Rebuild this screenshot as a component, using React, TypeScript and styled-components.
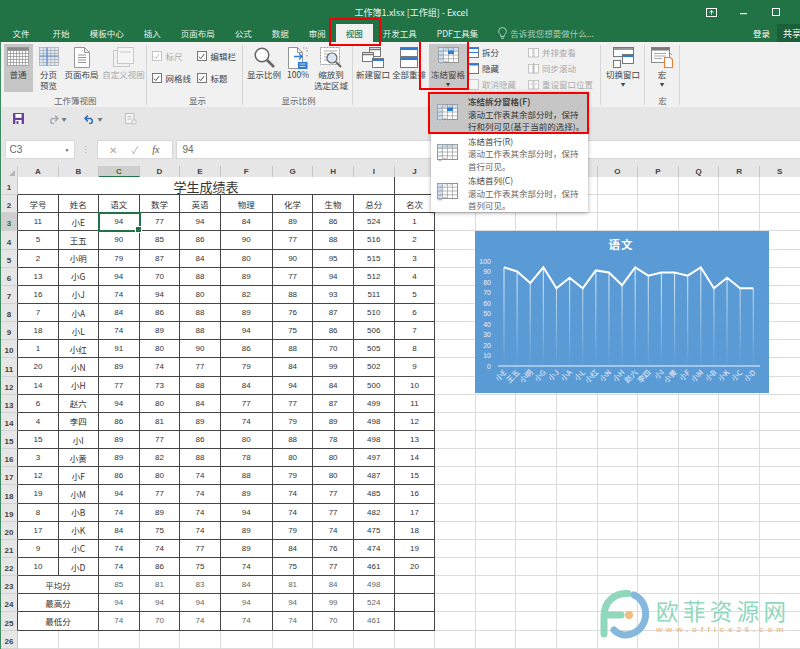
import React from "react";
import styled, { createGlobalStyle } from "styled-components";

const GlobalStyle = createGlobalStyle`
  html, body { margin: 0; padding: 0; background: #fff; }
  * { box-sizing: border-box; }
`;
const CJK = `"Noto Sans CJK SC", "Liberation Sans", sans-serif`;
const LATIN = `"Liberation Sans", "Noto Sans CJK SC", sans-serif`;

const Page = styled.div`
  position: relative; width: 800px; height: 649px; overflow: hidden;
  font-family: ${CJK}; font-size: 8.5px; color: #444; background: #fff;
`;
const Head = styled.header`background: #217346; color: #fff; height: 42px; display: flex; flex-direction: column;`;
const TitleBar = styled.div`height: 24px; display: flex; align-items: center; position: relative;`;
const TitleText = styled.div`flex: 1; padding-left: 30px; text-align: center; font-size: 9px; color: #e8f1ec; padding-top: 1px;`;
const WinControls = styled.div`display: flex; padding-right: 7px; margin-left: -97px; color: #fff;`;
const WinBtn = styled.div`width: 32.5px; height: 24px; display: flex; align-items: center; justify-content: center;`;
const TabRow = styled.nav`height: 18px; display: flex; align-items: stretch; padding-left: 2.6px;`;
const Tab = styled.div<{ $active?: boolean }>`
  position: relative; padding: 0 10px; display: flex; align-items: center; font-size: 8.5px;
  white-space: nowrap; color: ${(p) => (p.$active ? "#217346" : "#e6f0ea")};
  background: ${(p) => (p.$active ? "#f1f1f1" : "transparent")};
  font-weight: ${(p) => (p.$active ? 500 : 400)};
  &:first-child { padding-right: 13px; }
`;
const TellMe = styled.div`display: flex; align-items: center; gap: 3px; padding-left: 10px; color: #a9cdb9; font-size: 8.5px; flex: 1;`;
const SignIn = styled.div`display: flex; align-items: center; padding-right: 7px; font-size: 8.5px;`;
const Share = styled.div`width: 23px; background: #1c5f3b; display: flex; align-items: center; gap: 2px; padding-left: 4px; font-size: 9px; overflow: hidden; white-space: nowrap;`;

const Body = styled.div`border-left: 1.5px solid #3f8a62; height: 607px; display: flex; flex-direction: column; overflow: hidden;`;
const Ribbon = styled.section`height: 65px; background: #f1f1f1; display: flex; flex: none;`;
const Group = styled.div<{ $w: number; $pad?: number; $plain?: boolean }>`
  width: ${(p) => p.$w}px; flex: none; display: flex; flex-direction: column; position: relative;
  padding-left: ${(p) => p.$pad ?? 0}px;
  &::after {
    content: ""; position: absolute; right: 0; top: 3px; bottom: 2px; width: 1px;
    background: ${(p) => (p.$plain ? "transparent" : "#d6d6d6")};
  }
`;
const GroupBody = styled.div`height: 53px; padding-top: 2px; display: flex; align-items: flex-start;`;
const GroupLabel = styled.div`height: 11px; line-height: 11px; text-align: center; color: #666; font-size: 8.5px;`;
const BigBtn = styled.div<{ $w: number; $h?: number; $on?: boolean; $off?: boolean; $ml?: number }>`
  position: relative; width: ${(p) => p.$w}px; height: ${(p) => p.$h ?? 48}px; flex: none; margin-left: ${(p) => p.$ml ?? 0}px;
  background: ${(p) => (p.$on ? "#c6c6c6" : "transparent")}; color: ${(p) => (p.$off ? "#aaa" : "#444")};
  display: flex; flex-direction: column; align-items: center; text-align: center; padding-top: 3px;
  line-height: 10.5px; white-space: nowrap;
`;
const IconBox = styled.div`height: 22px; flex: none; display: flex; align-items: flex-start; justify-content: center;`;
const Caret = styled.div`font-size: 4.5px; line-height: 6px; color: #444; margin-top: 1px;`;
const Checks = styled.div`display: grid; grid-template-columns: 45px auto; grid-auto-rows: 22px; padding-top: 1px;`;
const CheckItem = styled.div<{ $off?: boolean }>`
  display: flex; align-items: center; gap: 4px; color: ${(p) => (p.$off ? "#aaa" : "#444")};
`;
const Box = styled.span<{ $off?: boolean }>`
  width: 9.5px; height: 9.5px; border: 1px solid ${(p) => (p.$off ? "#c4c4c4" : "#777")};
  background: #fff; display: inline-flex; align-items: center; justify-content: center;
`;
const SmallCol = styled.div<{ $ml?: number; $w: number }>`
  width: ${(p) => p.$w}px; margin-left: ${(p) => p.$ml ?? 0}px; flex: none; display: flex; flex-direction: column;
`;
const SmallItem = styled.div<{ $off?: boolean }>`
  height: 16px; display: flex; align-items: center; gap: 3px; white-space: nowrap;
  color: ${(p) => (p.$off ? "#aaa" : "#444")};
`;

const Qat = styled.div`height: 23px; background: #e6e6e6; flex: none; display: flex; align-items: center; padding-left: 11.5px;`;
const QatSlot = styled.div<{ $w: number }>`width: ${(p) => p.$w}px; flex: none; display: flex; align-items: center; gap: 3px; font-size: 5px; color: #777;`;
const FormulaBar = styled.div`height: 36px; flex: none; background: #e6e6e6; display: flex; align-items: flex-start; padding: 10px 0 0 3.5px; color: #666;`;
const NameBox = styled.div`
  width: 70px; height: 19px; background: #fff; border: 1px solid #d8d8d8; display: flex; align-items: center;
  justify-content: space-between; padding: 0 4px; font: 10px ${LATIN}; color: #666;
`;
const NameCaret = styled.span`font-size: 5px;`;
const Dots = styled.div`width: 22px; text-align: center; font-size: 9px; color: #aaa; letter-spacing: 0; line-height: 19px;`;
const FuncBox = styled.div`
  width: 76px; height: 19px; background: #fff; border: 1px solid #d8d8d8; display: flex; align-items: center;
  justify-content: space-around; padding: 0 5px; color: #aaa; font-size: 10px;
`;
const Fx = styled.i`font: italic 10px "Liberation Serif", serif; color: #555;`;
const Input = styled.div`
  flex: 1; margin-left: 3px; height: 19px; background: #fff; border: 1px solid #d8d8d8; border-right: 0;
  padding-left: 6px; font: 10px/17px ${LATIN}; color: #666;
`;

const Sheet = styled.div`
  display: grid; flex: 1; min-height: 0; overflow: hidden;
  grid-template-columns: 17px 40.8px 40px 41px 40.4px 40.6px 52px 40.7px 40.3px 41px 40.4px repeat(9, 40.6px);
  grid-template-rows: 11px repeat(26, 18.15px);
`;
const Corner = styled.div`background: #e6e6e6; position: relative; border-right: 1px solid #cfcfcf;
  &::after { content: ""; position: absolute; right: 2px; bottom: 1px; border: 3px solid transparent; border-right-color: #b5b5b5; border-bottom-color: #b5b5b5; }
`;
const ColHead = styled.div<{ $on?: boolean }>`
  background: ${(p) => (p.$on ? "#cfcfcf" : "#e6e6e6")}; border-right: 1px solid #c6c6c6;
  border-bottom: ${(p) => (p.$on ? "1.5px solid #217346" : "0")}; text-align: center; color: ${(p) => (p.$on ? "#217346" : "#444")};
  font: bold 8px/11px ${LATIN};
`;
const RowHead = styled.div<{ $on?: boolean; $frame?: boolean }>`
  background: ${(p) => (p.$on ? "#cfcfcf" : "#e6e6e6")};
  border-right: ${(p) => (p.$on ? "1.5px solid #217346" : p.$frame ? "1px solid #444" : "1px solid #c6c6c6")};
  border-bottom: 1px solid #d2d2d2; color: ${(p) => (p.$on ? "#217346" : "#444")};
  font: bold 8px/1 ${LATIN}; display: flex; align-items: flex-end; justify-content: center; padding-bottom: 2px;
`;
const Cell = styled.div<{ $frame?: boolean; $span?: number; $active?: boolean; $soft?: boolean; $title?: boolean }>`
  position: relative; background: #fff; min-width: 0;
  grid-column: span ${(p) => p.$span ?? 1};
  border-right: 1px solid ${(p) => (p.$frame ? "#444" : "#dcdcdc")};
  border-bottom: 1px solid ${(p) => (p.$frame ? "#444" : "#dcdcdc")};
  display: flex; align-items: center; justify-content: center; white-space: nowrap;
  font-family: ${LATIN}; font-size: ${(p) => (p.$title ? 13 : 8)}px;
  color: ${(p) => (p.$soft ? "#666" : "#333")};
  ${(p) => p.$title && "padding-top: 1px;"}
  ${(p) =>
    p.$active &&
    `outline: 2px solid #217346; outline-offset: -1px; z-index: 1;
     &::after { content: ""; position: absolute; right: -3px; bottom: -3px; width: 5px; height: 5px; background: #217346; border: 1px solid #fff; }`}
`;
const CnText = styled.span`font-family: ${CJK}; font-size: 8.5px;`;
const CnTitle = styled.span`font-family: ${CJK}; font-size: 13px; color: #333;`;

const Menu = styled.div`
  position: absolute; left: 431px; top: 92px; width: 157px; background: #fff; z-index: 5;
  box-shadow: 0 1px 4px rgba(0,0,0,.35); padding-top: 1px;
`;
const MenuItem = styled.div<{ $on?: boolean }>`
  position: relative;
  height: 39.7px; display: flex; background: ${(p) => (p.$on ? "#c6c6c6" : "#fff")}; padding-left: 6px;
`;
const MenuIcon = styled.div`width: 31px; flex: none; padding-top: 11px;`;
const MenuText = styled.div`line-height: 12.5px; padding-top: 2px; white-space: nowrap;`;
const MenuTitle = styled.div<{ $bold?: boolean }>`font-weight: ${(p) => (p.$bold ? 700 : 400)}; color: #444;`;
const MenuDesc = styled.div<{ $on?: boolean }>`color: ${(p) => (p.$on ? "#333" : "#666")};`;

const RedBox = styled.span<{ $box: string }>`
  position: absolute; inset: ${(p) => p.$box}; border: 2.6px solid #f40000; z-index: 8; pointer-events: none;
`;
const Chart = styled.div`position: absolute; left: 475px; top: 231px; width: 294px; height: 162px; background: #5b9bd5; z-index: 2;`;
const ChartSvg = styled.svg`display: block;`;
const Mark = styled.div`position: absolute; left: 600px; top: 590px; z-index: 3; display: flex; gap: 6px; pointer-events: none;`;
const MarkText = styled.div`display: flex; flex-direction: column; padding-top: 8px;`;
const MarkName = styled.div`font-size: 22.5px; line-height: 24px; letter-spacing: 4.4px; color: #90d7bd; white-space: nowrap;`;
const MarkUrl = styled.div`font: bold 8px/10px ${LATIN}; letter-spacing: 3.85px; color: #f2c08a; white-space: nowrap; margin-top: 3px;`;

/* ---------- icons ---------- */
const range = (n: number) => Array.from({ length: n }, (_, i) => i);
const GridLines = ({ x, y, w, h, cols, rows, c = "#9a9a9a" }: any) => (
  <g stroke={c} strokeWidth=".7" fill="none">
    <rect x={x} y={y} width={w} height={h} />
    {range(cols - 1).map((i) => <line key={"c" + i} x1={x + ((i + 1) * w) / cols} x2={x + ((i + 1) * w) / cols} y1={y} y2={y + h} />)}
    {range(rows - 1).map((i) => <line key={"r" + i} y1={y + ((i + 1) * h) / rows} y2={y + ((i + 1) * h) / rows} x1={x} x2={x + w} />)}
  </g>
);
const NormalIcon = () => (
  <svg width="22" height="19" viewBox="0 0 22 19"><rect x=".5" y=".5" width="21" height="18" fill="#fff" />
    <rect x=".5" y=".5" width="21" height="3" fill="#8a8a8a" /><GridLines x={.5} y={.5} w={21} h={18} cols={7} rows={6} c="#8d8d8d" /></svg>
);
const BreakIcon = () => (
  <svg width="20" height="19" viewBox="0 0 20 19"><rect x=".5" y=".5" width="19" height="18" fill="#dde8f6" />
    <GridLines x={.5} y={.5} w={19} h={18} cols={5} rows={6} c="#a8a8a8" /><path d="M8 .5v18M.5 9h19" stroke="#5b8fd0" strokeWidth="1.2" /></svg>
);
const PageIcon = ({ c = "#8a8a8a" }: { c?: string }) => (
  <svg width="16" height="21" viewBox="0 0 16 21" fill="none" stroke={c} strokeWidth=".9"><path d="M.5.5h10l5 5v15H.5zM10.5.5v5h5" fill="#fff" />
    <path d="M4 8h8M4 10.5h8M4 13h8M4 15.5h8" /></svg>
);
const CustomIcon = () => (
  <svg width="21" height="20" viewBox="0 0 21 20" fill="none" stroke="#c9c9c9"><rect x=".5" y="3.5" width="16" height="16" /><rect x="4.5" y=".5" width="16" height="16" fill="#f5f5f5" /><path d="M7 5h11" /></svg>
);
const Magnifier = () => (
  <svg width="21" height="21" viewBox="0 0 21 21" fill="none"><circle cx="8" cy="8" r="6.8" stroke="#666" strokeWidth="1.5" fill="#fff" /><path d="M13 13l7 7" stroke="#666" strokeWidth="2.6" /></svg>
);
const HundredIcon = () => (
  <svg width="20" height="23" viewBox="0 0 20 23" fill="none" stroke="#888" strokeWidth=".9"><path d="M.5.5h9l5 5v16H.5zM9.5.5v5h5" fill="#fff" /><path d="M15 1h4v4M19 8v3" strokeDasharray="1.5 1.5" />
    <path d="M6 9.5h8M11 6.5l3 3-3 3" stroke="#2b7cd3" strokeWidth="1.3" /><rect x="10" y="15" width="9.5" height="7" fill="#2b7cd3" stroke="none" /><path d="M11.5 17h6M11.5 19.5h6" stroke="#fff" strokeWidth=".7" /></svg>
);
const ZoomSelIcon = () => (
  <svg width="23" height="22" viewBox="0 0 23 22" fill="none"><rect x=".5" y=".5" width="19" height="17" stroke="#999" fill="#fff" strokeDasharray="2 1" /><path d="M4 4h13M4 7h5M4 10h4M4 13h4" stroke="#aaa" />
    <circle cx="12" cy="11" r="5" stroke="#666" strokeWidth="1.2" fill="#dbe7f5" /><path d="M16 15l5 5" stroke="#666" strokeWidth="2" /></svg>
);
const NewWinIcon = () => (
  <svg width="22" height="21" viewBox="0 0 22 21" fill="none"><rect x="7.5" y=".5" width="11" height="9" fill="#fff" stroke="#777" /><path d="M7.5 2.5h11" stroke="#777" strokeWidth="1.5" />
    <rect x=".5" y="5.5" width="11" height="9" fill="#fff" stroke="#777" /><path d="M.5 7.5h11" stroke="#777" strokeWidth="1.5" /><rect x="10.5" y="11.5" width="11" height="9" fill="#fff" stroke="#777" /><path d="M10.5 13h11" stroke="#2b7cd3" strokeWidth="2" /></svg>
);
const ArrangeIcon = () => (
  <svg width="18" height="21" viewBox="0 0 18 21" fill="none"><rect x=".5" y=".5" width="17" height="9" fill="#fff" stroke="#777" /><path d="M.5 2h17" stroke="#2b7cd3" strokeWidth="2" /><rect x=".5" y="10.5" width="17" height="10" fill="#fff" stroke="#777" /><path d="M.5 12h17" stroke="#2b7cd3" strokeWidth="2" /></svg>
);
const FreezeIcon = ({ top = true, left = true, mark = true }: { top?: boolean; left?: boolean; mark?: boolean }) => (
  <svg width="21" height="19" viewBox="0 0 21 19" fill="none">
    <rect x=".5" y=".5" width="20" height="15" fill="#fff" stroke="#888" />
    {top && <rect x=".5" y=".5" width="20" height="4" fill="#cfe0f3" />}
    {left && <rect x=".5" y=".5" width="5" height="17" fill="#cfe0f3" />}
    <GridLines x={.5} y={.5} w={20} h={15} cols={4} rows={4} c="#999" />
    {mark && <rect x="10" y="3.5" width="6" height="3.5" fill="#2b7cd3" />}
    <path d="M.5 15.5q2.5 3 5 0t5 0" stroke="#999" strokeWidth=".7" />
    <path d="M2 5l3-2M2 9l3-2M2 13l3-2M7 3l3-2M12 3l3-2" stroke="#7fa6d6" strokeWidth=".6" />
  </svg>
);
const SplitIcon = ({ mode, off }: { mode: string; off?: boolean }) => (
  <svg width="11" height="11" viewBox="0 0 11 11" fill="none">
    <rect x=".5" y=".5" width="10" height="10" fill={off ? "#f5f5f5" : "#fff"} stroke={off ? "#c8c8c8" : "#777"} />
    {mode === "split" && <path d="M.5 5.5h10M.5 1.5h10" stroke="#2b7cd3" strokeWidth="1.2" />}
    {mode === "hide" && <path d="M.5 1.5h10" stroke="#2b7cd3" strokeWidth="2" />}
  </svg>
);
const PairIcon = ({ mode }: { mode: string }) => (
  <svg width="11" height="11" viewBox="0 0 11 11" fill="none" stroke="#c4c4c4"><rect x=".5" y="1.5" width="4.5" height="8.5" fill="#fafafa" /><rect x="6" y="1.5" width="4.5" height="8.5" fill="#fafafa" />
    {mode === "sync" && <path d="M5.5 0v11" strokeDasharray="1.5 1" stroke="#aaa" />}{mode === "reset" && <path d="M2 5h2M7 5h2" />}</svg>
);
const SwitchIcon = () => (
  <svg width="21" height="21" viewBox="0 0 21 21" fill="none"><rect x=".5" y=".5" width="20" height="9" fill="#fff" stroke="#777" /><path d="M.5 2h20" stroke="#777" strokeWidth="1.5" />
    <rect x="9.5" y="7.5" width="11" height="9" fill="#fff" stroke="#777" /><path d="M9.5 9h11" stroke="#2b7cd3" strokeWidth="2" /><rect x=".5" y="13.5" width="7" height="7" fill="#fff" stroke="#777" /></svg>
);
const MacroIcon = () => (
  <svg width="22" height="21" viewBox="0 0 22 21" fill="none"><rect x=".5" y=".5" width="18" height="15" fill="#fff" stroke="#888" /><rect x=".5" y=".5" width="18" height="3" fill="#7a7a7a" /><path d="M3 6.5h12M3 9h12M3 11.5h8" stroke="#aaa" />
    <path d="M13.5 10.5h6l2 2v8h-8z" fill="#fff" stroke="#ed7d31" strokeWidth="1.2" /><path d="M19 6l2 2" stroke="#ed7d31" /></svg>
);
const Tick = ({ off }: { off?: boolean }) => (
  <svg width="7" height="7" viewBox="0 0 7 7" fill="none"><path d="M.8 3.6l2 2L6.2 1" stroke={off ? "#bbb" : "#555"} strokeWidth="1" /></svg>
);
const Bulb = () => (
  <svg width="9" height="12" viewBox="0 0 9 12" fill="none" stroke="#bcd9c9" strokeWidth=".9"><path d="M2.8 8C1.5 7 .6 6 .6 4.4a3.9 3.9 0 017.8 0C8.4 6 7.5 7 6.2 8v1.5H2.8zM3 11.2h3" /></svg>
);
const Person = () => (
  <svg width="12" height="13" viewBox="0 0 12 13" fill="none" stroke="#fff" strokeWidth="1.1"><circle cx="5.5" cy="4" r="3.2" /><path d="M.8 12.5c.3-3 2-4.8 4.7-4.8M8 10h4M10 8v4" /></svg>
);
const SaveIcon = () => (
  <svg width="11" height="11" viewBox="0 0 11 11"><rect width="11" height="11" fill="#6a3f9e" /><rect x="2.4" y="1" width="6.2" height="3.8" fill="#fff" /><rect x="2.4" y="7" width="6.2" height="4" fill="#fff" /><rect x="3.5" y="8" width="2" height="3" fill="#6a3f9e" /></svg>
);
const Arrow = ({ c, flip }: { c: string; flip?: boolean }) => (
  <svg width="11" height="10" viewBox="0 0 11 10" fill="none" stroke={c} strokeWidth="1.5" transform={flip ? "scale(-1 1)" : undefined}><path d="M1 4.5h6a3 3 0 010 5H5M3.8 1.5l-2.8 3 2.8 3" /></svg>
);
const QatDoc = () => (
  <svg width="12" height="12" viewBox="0 0 12 12" fill="none" stroke="#c0c0c0"><rect x=".5" y=".5" width="8.5" height="10" fill="#f2f2f2" /><path d="M2.5 3.5h4M2.5 6h4" /><circle cx="9" cy="9" r="2.3" fill="#eee" /></svg>
);
const Logo = () => (
  <svg width="50" height="50" viewBox="0 0 50 50" fill="none" strokeLinecap="round" strokeWidth="7">
    <path d="M28 3.5C14 3 4 12 4 26v18M4 25h17" stroke="#8fd8bc" />
    <path d="M34 5c18 8 15 38-8 40-5 0-9-2-12-5" stroke="#86b8de" />
    <circle cx="29" cy="25" r="4" fill="#f2bd80" />
  </svg>
);

/* ---------- data ---------- */
/* K to N lie entirely under the open menu, so their header letters do not show. */
const columns = ["A", "B", "C", "D", "E", "F", "G", "H", "I", "J", "", "", "", "", "O", "P", "Q", "R", "S"];
const heads = ["学号", "姓名", "语文", "数学", "英语", "物理", "化学", "生物", "总分", "名次"];
const rows: (string | number)[][] = [
  [11, "小E", 94, 77, 94, 84, 89, 86, 524, 1], [5, "王五", 90, 85, 86, 90, 77, 88, 516, 2],
  [2, "小明", 79, 87, 84, 80, 90, 95, 515, 3], [13, "小G", 94, 70, 88, 89, 77, 94, 512, 4],
  [16, "小J", 74, 94, 80, 82, 88, 93, 511, 5], [7, "小A", 84, 86, 88, 89, 76, 87, 510, 6],
  [18, "小L", 74, 89, 88, 94, 75, 86, 506, 7], [1, "小红", 91, 80, 90, 86, 88, 70, 505, 8],
  [20, "小N", 89, 74, 77, 79, 84, 99, 502, 9], [14, "小H", 77, 73, 88, 84, 94, 84, 500, 10],
  [6, "赵六", 94, 80, 84, 77, 77, 87, 499, 11], [4, "李四", 86, 81, 89, 74, 79, 89, 498, 12],
  [15, "小I", 89, 77, 86, 80, 88, 78, 498, 13], [3, "小黄", 89, 82, 88, 78, 80, 80, 497, 14],
  [12, "小F", 86, 80, 74, 88, 79, 80, 487, 15], [19, "小M", 94, 77, 74, 89, 74, 77, 485, 16],
  [8, "小B", 74, 89, 74, 94, 74, 77, 482, 17], [17, "小K", 84, 75, 74, 89, 79, 74, 475, 18],
  [9, "小C", 74, 74, 77, 89, 84, 76, 474, 19], [10, "小D", 74, 86, 75, 74, 75, 77, 461, 20],
];
const stats: [string, number[]][] = [
  ["平均分", [85, 81, 83, 84, 81, 84, 498]],
  ["最高分", [94, 94, 94, 94, 94, 99, 524]],
  ["最低分", [74, 70, 74, 74, 74, 70, 461]],
];
const blanks = (n: number, k: string) => range(n).map((i) => <Cell key={k + i} />);

const SalesChart = () => {
  const vals = rows.map((r) => r[2] as number);
  const names = rows.map((r) => r[1] as string);
  const X = (i: number) => 29 + i * 13.12;
  const Y = (v: number) => 135 - v * 1.05;
  return (
    <Chart>
      <ChartSvg width="294" height="162" viewBox="0 0 294 162" fontFamily={CJK}>
        <defs>
          <linearGradient id="drop" gradientUnits="userSpaceOnUse" x1="0" y1="30" x2="0" y2="135">
            <stop offset="0" stopColor="#fff" stopOpacity=".85" />
            <stop offset="1" stopColor="#fff" stopOpacity="0" />
          </linearGradient>
        </defs>
        <text x="146" y="17.5" textAnchor="middle" fill="#fff" fontSize="11.5" fontWeight="700" letterSpacing="1">语文</text>
        {range(11).map((i) => (
          <text key={i} x="16" y={Y(i * 10) + 2.6} textAnchor="end" fill="#e9f1fa" fontSize="7" fontFamily={LATIN}>{i * 10}</text>
        ))}
        {vals.map((v, i) => <line key={i} x1={X(i)} x2={X(i)} y1={Y(v)} y2={135} stroke="url(#drop)" strokeWidth="1.1" />)}
        <line x1="23" x2="285" y1="135" y2="135" stroke="#eaf2fb" strokeWidth="1" />
        <polyline points={vals.map((v, i) => `${X(i)},${Y(v)}`).join(" ")} fill="none" stroke="#fff" strokeWidth="2" />
        {names.map((n, i) => (
          <text key={n} transform={`translate(${X(i) + 3} 142) rotate(-45)`} textAnchor="end" fill="#e9f1fa" fontSize="7.5">{n}</text>
        ))}
      </ChartSvg>
    </Chart>
  );
};

export default function App() {
  return (
    <Page>
      <GlobalStyle />
      <Head>
        <TitleBar>
          <TitleText>工作簿1.xlsx  [工作组] - Excel</TitleText>
          <WinControls>
            <WinBtn><svg width="11" height="9" viewBox="0 0 11 9" fill="none" stroke="#fff"><rect x=".5" y=".5" width="10" height="8" /><path d="M5.5 6.5v-4M3.5 4.5l2-2 2 2" /></svg></WinBtn>
            <WinBtn><svg width="8" height="8" viewBox="0 0 8 8"><rect y="5" width="7" height="1.2" fill="#fff" /></svg></WinBtn>
            <WinBtn><svg width="9" height="9" viewBox="0 0 9 9" fill="none" stroke="#fff"><rect x=".5" y=".5" width="7" height="7" /></svg></WinBtn>
          </WinControls>
        </TitleBar>
        <TabRow>
          <Tab>文件</Tab><Tab>开始</Tab><Tab>模板中心</Tab><Tab>插入</Tab><Tab>页面布局</Tab><Tab>公式</Tab><Tab>数据</Tab><Tab>审阅</Tab>
          <Tab $active>视图<RedBox $box="-6px -8px -4px -7px" /></Tab>
          <Tab>开发工具</Tab><Tab>PDF工具集</Tab>
          <TellMe><Bulb />告诉我您想要做什么...</TellMe>
          <SignIn>登录</SignIn>
          <Share><Person />共享</Share>
        </TabRow>
      </Head>
      <Body>
        <Ribbon>
          <Group $w={146} $pad={2.5}>
            <GroupBody>
              <BigBtn $w={29} $on><IconBox><NormalIcon /></IconBox>普通</BigBtn>
              <BigBtn $w={26} $ml={3}><IconBox><BreakIcon /></IconBox>分页<br />预览</BigBtn>
              <BigBtn $w={40}><IconBox><PageIcon /></IconBox>页面布局</BigBtn>
              <BigBtn $w={44} $off><IconBox><CustomIcon /></IconBox><span>自定义视图</span></BigBtn>
            </GroupBody>
            <GroupLabel>工作簿视图</GroupLabel>
          </Group>
          <Group $w={96} $pad={5}>
            <GroupBody>
              <Checks>
                <CheckItem $off><Box $off><Tick off /></Box>标尺</CheckItem>
                <CheckItem><Box><Tick /></Box>编辑栏</CheckItem>
                <CheckItem><Box><Tick /></Box>网格线</CheckItem>
                <CheckItem><Box><Tick /></Box>标题</CheckItem>
              </Checks>
            </GroupBody>
            <GroupLabel>显示</GroupLabel>
          </Group>
          <Group $w={110} $pad={1}>
            <GroupBody>
              <BigBtn $w={40}><IconBox><Magnifier /></IconBox>显示比例</BigBtn>
              <BigBtn $w={28}><IconBox><HundredIcon /></IconBox><span>100%</span></BigBtn>
              <BigBtn $w={38}><IconBox><ZoomSelIcon /></IconBox>缩放到<br />选定区域</BigBtn>
            </GroupBody>
            <GroupLabel>显示比例</GroupLabel>
          </Group>
          <Group $w={248} $pad={2}>
            <GroupBody>
              <BigBtn $w={36}><IconBox><NewWinIcon /></IconBox>新建窗口</BigBtn>
              <BigBtn $w={36}><IconBox><ArrangeIcon /></IconBox>全部重排</BigBtn>
              <BigBtn $w={38} $h={45} $ml={2} $on><IconBox><FreezeIcon /></IconBox>冻结窗格<Caret>▼</Caret><RedBox $box="-5px -1.5px -1px -10px" /></BigBtn>
              <SmallCol $w={60} $ml={1}>
                <SmallItem><SplitIcon mode="split" />拆分</SmallItem>
                <SmallItem><SplitIcon mode="hide" />隐藏</SmallItem>
                <SmallItem $off><SplitIcon mode="none" off />取消隐藏</SmallItem>
              </SmallCol>
              <SmallCol $w={70}>
                <SmallItem $off><PairIcon mode="pair" />并排查看</SmallItem>
                <SmallItem $off><PairIcon mode="sync" />同步滚动</SmallItem>
                <SmallItem $off><PairIcon mode="reset" />重设窗口位置</SmallItem>
              </SmallCol>
            </GroupBody>
            <GroupLabel />
          </Group>
          <Group $w={44} $pad={3}>
            <GroupBody><BigBtn $w={38}><IconBox><SwitchIcon /></IconBox>切换窗口<Caret>▼</Caret></BigBtn></GroupBody>
            <GroupLabel />
          </Group>
          <Group $w={35} $pad={0}>
            <GroupBody><BigBtn $w={34}><IconBox><MacroIcon /></IconBox>宏<Caret>▼</Caret></BigBtn></GroupBody>
            <GroupLabel>宏</GroupLabel>
          </Group>
        </Ribbon>
        <Qat>
          <QatSlot $w={35}><SaveIcon /></QatSlot>
          <QatSlot $w={36}><Arrow c="#aaa" flip />▼</QatSlot>
          <QatSlot $w={41}><Arrow c="#2b6cb8" />▼</QatSlot>
          <QatSlot $w={20}><QatDoc /></QatSlot>
        </Qat>
        <FormulaBar>
          <NameBox>C3<NameCaret>▼</NameCaret></NameBox>
          <Dots>⋮</Dots>
          <FuncBox><span>✕</span><span>✓</span><Fx>fx</Fx></FuncBox>
          <Input>94</Input>
        </FormulaBar>
        <Sheet>
          <Corner />
          {columns.map((c, i) => <ColHead key={i} $on={c === "C"}>{c}</ColHead>)}

          <RowHead>1</RowHead>
          <Cell $frame $span={9} $title><CnTitle>学生成绩表</CnTitle></Cell>
          <Cell $frame />
          {blanks(9, "a")}

          <RowHead $frame>2</RowHead>
          {heads.map((h) => <Cell key={h} $frame><CnText>{h}</CnText></Cell>)}
          {blanks(9, "b")}

          {rows.map((r, i) => (
            <React.Fragment key={i}>
              <RowHead $frame $on={i === 0}>{i + 3}</RowHead>
              {r.map((v, j) => (
                <Cell key={j} $frame $active={i === 0 && j === 2}>
                  {j === 1 ? <CnText>{v}</CnText> : v}
                </Cell>
              ))}
              {blanks(9, `r${i}`)}
            </React.Fragment>
          ))}

          {stats.map(([label, vals], i) => (
            <React.Fragment key={label}>
              <RowHead $frame>{i + 23}</RowHead>
              <Cell $frame $span={2}><CnText>{label}</CnText></Cell>
              {vals.map((v, j) => <Cell key={j} $frame $soft>{v}</Cell>)}
              <Cell $frame />
              {blanks(9, `s${i}`)}
            </React.Fragment>
          ))}

          <RowHead>26</RowHead>
          {blanks(19, "z")}
        </Sheet>
      </Body>

      <Menu>
        <MenuItem $on>
          <MenuIcon><FreezeIcon /></MenuIcon>
          <MenuText>
            <MenuTitle $bold>冻结拆分窗格(F)</MenuTitle>
            <MenuDesc $on>滚动工作表其余部分时，保持</MenuDesc>
            <MenuDesc $on>行和列可见(基于当前的选择)。</MenuDesc>
          </MenuText>
          <RedBox $box="-1px -1px -1.5px -3px" />
        </MenuItem>
        <MenuItem>
          <MenuIcon><FreezeIcon left={false} mark={false} /></MenuIcon>
          <MenuText>
            <MenuTitle>冻结首行(R)</MenuTitle>
            <MenuDesc>滚动工作表其余部分时，保持</MenuDesc>
            <MenuDesc>首行可见。</MenuDesc>
          </MenuText>
        </MenuItem>
        <MenuItem>
          <MenuIcon><FreezeIcon top={false} mark={false} /></MenuIcon>
          <MenuText>
            <MenuTitle>冻结首列(C)</MenuTitle>
            <MenuDesc>滚动工作表其余部分时，保持</MenuDesc>
            <MenuDesc>首列可见。</MenuDesc>
          </MenuText>
        </MenuItem>
      </Menu>
      <SalesChart />
      <Mark>
        <Logo />
        <MarkText>
          <MarkName>欧菲资源网</MarkName>
          <MarkUrl>www.office26.com</MarkUrl>
        </MarkText>
      </Mark>
    </Page>
  );
}
